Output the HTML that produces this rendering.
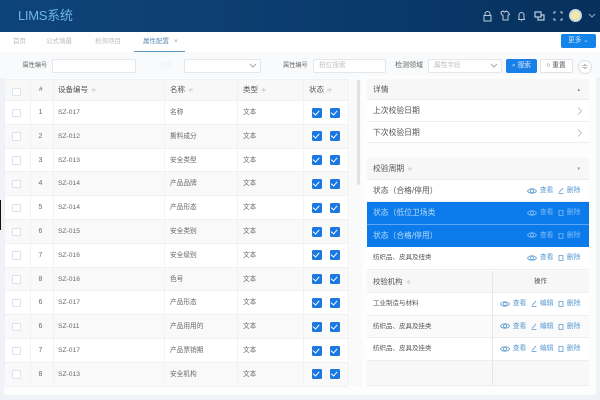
<!DOCTYPE html>
<html lang="zh">
<head>
<meta charset="utf-8">
<title>LIMS系统</title>
<style>
*{box-sizing:border-box}
html,body{margin:0;padding:0}
body{width:600px;height:400px;overflow:hidden;position:relative;background:#eff2f6;font-family:"Liberation Sans","Noto Sans CJK SC",sans-serif;color:#555;font-size:8px}
.a{position:absolute;white-space:nowrap}
.hdr{left:0;top:0;width:600px;height:32px;background:linear-gradient(90deg,#0d4478 0,#0e3f72 35%,#0a3a6c 60%,#07305c 100%)}
.logo{left:18px;top:7px;font-size:13px;line-height:18px;color:#6fb4ea;letter-spacing:-.3px}
.tabs{left:0;top:32px;width:600px;height:20px;background:#fff}
.tab{top:37px;font-size:6.5px;line-height:10px;color:#b8bcc1}
.band{left:0;top:52px;width:600px;height:26px;background:#f9fafb}
.inp{height:14px;background:#fff;border:1px solid #e3e6ea;border-radius:2px;font-size:6.700px;line-height:12px;color:#c0c0c0;padding-left:5px}
.lbl{font-size:6.200px;line-height:12px;color:#666}
.btn{height:14px;border-radius:2px;font-size:6.700px;line-height:13px;text-align:center}
.card{left:4px;top:78px;width:358px;height:317px;background:#fdfdfe}
.tbl{left:4px;top:79px;width:345px;height:307px;background:#fff;border:1px solid #eef0f2}
.row{position:absolute;left:0;width:343px;height:23.8px;border-bottom:1px solid #eff1f3;background:#fff}
.row.e{background:#f9f9f9}
.row.h{top:0;height:21px;background:#f8f8f8}
.vl{position:absolute;top:0;bottom:0;width:1px;background:#f1f2f4}
.c{position:absolute;top:0;line-height:23px;font-size:6.700px;color:#6a6a6a}
.n{font-size:7px}
.h .c{line-height:20px;font-size:7.500px;color:#555}
.cb{position:absolute;left:7px;top:7.500px;width:8.500px;height:8.500px;background:#fff;border:1px solid #dfe2e6;border-radius:1px}
.ck{position:absolute;top:6.500px;width:10px;height:10px;background:#1a78e0;border-radius:1.500px}
.ck:after{content:"";position:absolute;left:2.800px;top:1.200px;width:3px;height:5.400px;border:solid #fff;border-width:0 1.200px 1.200px 0;transform:rotate(42deg)}
.s{color:#c0c0c0;font-size:6.500px;margin-left:3px}
.pr{left:367px;width:222px;border-bottom:1px solid #eceef1;font-size:7.800px;line-height:22px;color:#555;padding-left:6px;background:#fff}
.ph{background:#f7f7f7}
.sm{font-size:6.500px}
.blue{background:#0b7bec;color:#b9daf9;border-bottom:1px solid #5ba7f2}
.op{position:absolute;top:0;right:8.500px;font-size:6.800px;color:#5b9bd2;line-height:22px;display:flex;align-items:center}
.blue .op{color:#7fbdf5}
.op svg{margin:-1px 2.500px 0 5px;flex:none}
.op svg:first-child{margin-left:0}
.ar{position:absolute;right:7px;top:7px}
.dot{position:absolute;right:9px;top:0;color:#888;font-size:5px;line-height:22px}
</style>
</head>
<body>
<div class="a hdr"></div>
<div class="a logo">LIMS系统</div>

<svg class="a" style="left:482px;top:9px" width="118" height="14" viewBox="0 0 118 14" fill="none" stroke="#bccbdc" stroke-width="1">
<path d="M3 6.500V5a2.500 2.500 0 0 1 5 0v1.500M2 6.500h7v5.500H2z"/>
<path d="M19 3l2-1 1.500 1.200L24 2l2 1 1.500 2.500-1.500.8V11h-5V6.300l-1.500-.8z"/>
<path d="M37 10.500V6a2.500 2.500 0 0 1 5 0v4.500zM36 10.500h7M39 12h1"/>
<path d="M53 3h6v5h-6zM56 8v3h6V6h-3" stroke-width="1.200"/>
<path d="M72 5V3h2M78 3h2v2M80 9v2h-2M74 11h-2V9"/>
</svg>
<div class="a" style="left:568.500px;top:9px;width:13px;height:13px;border-radius:50%;background:#f0e7a8;border:2px solid #c8dbe2"></div>
<svg class="a" style="left:588px;top:13px" width="8" height="6" viewBox="0 0 8 6" fill="none" stroke="#8fa9c4"><path d="M1 1l3 3 3-3"/></svg>

<div class="a tabs"></div>
<div class="a band"></div>
<div class="a tab" style="left:13px">首页</div>
<div class="a tab" style="left:46px">公式填最</div>
<div class="a tab" style="left:95px">检测项目</div>
<div class="a tab" style="left:143px;color:#5f8fb8">属性配置</div>
<div class="a tab" style="left:174px;color:#7c9cb8">×</div>
<div class="a" style="left:134px;top:51px;width:51px;height:1px;background:#5d9ac8"></div>
<div class="a btn" style="left:561px;top:34px;width:35px;height:14px;background:#1484ea;color:#cfe6fb">更多 ⌄</div>

<div class="a lbl" style="left:22.500px;top:60px">属性编号</div>
<div class="a inp" style="left:52px;top:59px;width:84px"></div>
<div class="a lbl" style="left:160px;top:60px;color:#f0f0f0">检测</div>
<div class="a inp" style="left:184px;top:59px;width:77px"></div>
<svg class="a" style="left:249px;top:63px" width="8" height="6" viewBox="0 0 8 6" fill="none" stroke="#aaa"><path d="M1 1l3 3 3-3"/></svg>
<div class="a lbl" style="left:283px;top:60px">属性编号</div>
<div class="a inp" style="left:313px;top:59px;width:73px">拍位搜索</div>
<div class="a lbl" style="left:395px;top:60px;font-size:7px">检测领域</div>
<div class="a inp" style="left:428px;top:59px;width:74px">属性字段</div>
<svg class="a" style="left:490px;top:63px" width="8" height="6" viewBox="0 0 8 6" fill="none" stroke="#aaa"><path d="M1 1l3 3 3-3"/></svg>
<div class="a btn" style="left:506px;top:59px;width:31px;background:#1a80e8;color:#d6e9fc">⌕ 搜索</div>
<div class="a btn" style="left:539.500px;top:59px;width:33px;background:#fff;border:1px solid #e0e3e7;color:#555;line-height:12px">○ 重置</div>
<div class="a" style="left:578px;top:59.500px;width:14px;height:14px;border:1px solid #dcdfe4;border-radius:50%;background:#fff;color:#777;font-size:8px;line-height:12px;text-align:center">≑</div>

<div class="a card"></div>
<div class="a tbl">
<div class="row h">
<span class="cb"></span>
<span class="c" style="left:34px;font-size:6.500px">#</span>
<span class="c" style="left:53px">设备编号<span class="s">≑</span></span>
<span class="c" style="left:165px">名称<span class="s">≑</span></span>
<span class="c" style="left:238px">类型<span class="s">≑</span></span>
<span class="c" style="left:304px">状态<span class="s">≑</span></span>
</div>

<div class="row" style="top:21px"><span class="cb"></span><span class="c n" style="left:33.500px">1</span><span class="c" style="left:53px">SZ-017</span><span class="c" style="left:165px">名称</span><span class="c" style="left:238px">文本</span><span class="ck" style="left:306.500px"></span><span class="ck" style="left:324.500px"></span></div>
<div class="row e" style="top:44.800px"><span class="cb"></span><span class="c n" style="left:33.500px">2</span><span class="c" style="left:53px">SZ-012</span><span class="c" style="left:165px">撕料成分</span><span class="c" style="left:238px">文本</span><span class="ck" style="left:306.500px"></span><span class="ck" style="left:324.500px"></span></div>
<div class="row" style="top:68.600px"><span class="cb"></span><span class="c n" style="left:33.500px">3</span><span class="c" style="left:53px">SZ-013</span><span class="c" style="left:165px">安全类型</span><span class="c" style="left:238px">文本</span><span class="ck" style="left:306.500px"></span><span class="ck" style="left:324.500px"></span></div>
<div class="row e" style="top:92.400px"><span class="cb"></span><span class="c n" style="left:33.500px">4</span><span class="c" style="left:53px">SZ-014</span><span class="c" style="left:165px">产品品牌</span><span class="c" style="left:238px">文本</span><span class="ck" style="left:306.500px"></span><span class="ck" style="left:324.500px"></span></div>
<div class="row" style="top:116.200px"><span class="cb"></span><span class="c n" style="left:33.500px">5</span><span class="c" style="left:53px">SZ-014</span><span class="c" style="left:165px">产品形态</span><span class="c" style="left:238px">文本</span><span class="ck" style="left:306.500px"></span><span class="ck" style="left:324.500px"></span></div>
<div class="row e" style="top:140px"><span class="cb"></span><span class="c n" style="left:33.500px">6</span><span class="c" style="left:53px">SZ-015</span><span class="c" style="left:165px">安全类别</span><span class="c" style="left:238px">文本</span><span class="ck" style="left:306.500px"></span><span class="ck" style="left:324.500px"></span></div>
<div class="row" style="top:163.800px"><span class="cb"></span><span class="c n" style="left:33.500px">7</span><span class="c" style="left:53px">SZ-016</span><span class="c" style="left:165px">安全级别</span><span class="c" style="left:238px">文本</span><span class="ck" style="left:306.500px"></span><span class="ck" style="left:324.500px"></span></div>
<div class="row e" style="top:187.600px"><span class="cb"></span><span class="c n" style="left:33.500px">8</span><span class="c" style="left:53px">SZ-016</span><span class="c" style="left:165px">色号</span><span class="c" style="left:238px">文本</span><span class="ck" style="left:306.500px"></span><span class="ck" style="left:324.500px"></span></div>
<div class="row" style="top:211.400px"><span class="cb"></span><span class="c n" style="left:33.500px">6</span><span class="c" style="left:53px">SZ-017</span><span class="c" style="left:165px">产品形态</span><span class="c" style="left:238px">文本</span><span class="ck" style="left:306.500px"></span><span class="ck" style="left:324.500px"></span></div>
<div class="row e" style="top:235.200px"><span class="cb"></span><span class="c n" style="left:33.500px">6</span><span class="c" style="left:53px">SZ-011</span><span class="c" style="left:165px">产品用用的</span><span class="c" style="left:238px">文本</span><span class="ck" style="left:306.500px"></span><span class="ck" style="left:324.500px"></span></div>
<div class="row" style="top:259px"><span class="cb"></span><span class="c n" style="left:33.500px">7</span><span class="c" style="left:53px">SZ-017</span><span class="c" style="left:165px">产品票销期</span><span class="c" style="left:238px">文本</span><span class="ck" style="left:306.500px"></span><span class="ck" style="left:324.500px"></span></div>
<div class="row e" style="top:282.800px"><span class="cb"></span><span class="c n" style="left:33.500px">8</span><span class="c" style="left:53px">SZ-013</span><span class="c" style="left:165px">安全机构</span><span class="c" style="left:238px">文本</span><span class="ck" style="left:306.500px"></span><span class="ck" style="left:324.500px"></span></div>

<div class="vl" style="left:25px"></div>
<div class="vl" style="left:48px"></div>
<div class="vl" style="left:159px"></div>
<div class="vl" style="left:232px"></div>
<div class="vl" style="left:298px"></div>
</div>

<div class="a" style="left:350px;top:79px;width:12px;height:307px;background:#f9fafb"></div>
<div class="a" style="left:356.500px;top:80px;width:3.500px;height:105px;background:#e0e2e5;border-radius:2px"></div>

<div class="a" style="left:362px;top:75px;width:234px;height:320px;background:#fdfdfe"></div>
<div class="a pr ph" style="top:79px;height:21px">详情<span class="dot">▴</span></div>
<div class="a pr" style="top:100px;height:22px">上次校验日期<svg class="ar" width="5" height="8" viewBox="0 0 5 8" fill="none" stroke="#c4c4c4"><path d="M1 .5L4.500 4 1 7.500"/></svg></div>
<div class="a pr" style="top:122px;height:21px">下次校验日期<svg class="ar" width="5" height="8" viewBox="0 0 5 8" fill="none" stroke="#c4c4c4"><path d="M1 .5L4.500 4 1 7.500"/></svg></div>

<div class="a pr ph" style="top:158px;height:22px">校验周期<span class="s">≑</span><span class="dot">▾</span></div>
<div class="a pr" style="top:180px;height:22px">状态（合格/停用）
<span class="op"><svg width="10" height="8" viewBox="0 0 10 8" fill="none" stroke="currentColor" stroke-width=".8"><path d="M.5 4C2.300 1 7.700 1 9.500 4 7.700 7 2.300 7 .5 4z"/><circle cx="5" cy="4" r="1.500"/></svg>查看<svg width="6" height="7" viewBox="0 0 6 7" fill="none" stroke="currentColor" stroke-width=".8"><path d="M1 5.500L5 1M.5 6.500h5"/></svg>删除</span></div>
<div class="a pr blue" style="top:202px;height:22.500px">状态（低位卫场类
<span class="op"><svg width="10" height="8" viewBox="0 0 10 8" fill="none" stroke="currentColor" stroke-width=".8"><path d="M.5 4C2.300 1 7.700 1 9.500 4 7.700 7 2.300 7 .5 4z"/><circle cx="5" cy="4" r="1.500"/></svg>查看<svg width="6" height="7" viewBox="0 0 6 7" fill="none" stroke="currentColor" stroke-width=".8"><path d="M1 1.500h4v5H1z"/></svg>删除</span></div>
<div class="a pr blue" style="top:224.500px;height:22.500px;border-bottom:0">状态（合格/停用）
<span class="op"><svg width="10" height="8" viewBox="0 0 10 8" fill="none" stroke="currentColor" stroke-width=".8"><path d="M.5 4C2.300 1 7.700 1 9.500 4 7.700 7 2.300 7 .5 4z"/><circle cx="5" cy="4" r="1.500"/></svg>查看<svg width="6" height="7" viewBox="0 0 6 7" fill="none" stroke="currentColor" stroke-width=".8"><path d="M1 1.500h4v5H1z"/></svg>删除</span></div>
<div class="a pr sm" style="top:247px;height:23px">纺织品、皮具及纽类
<span class="op"><svg width="10" height="8" viewBox="0 0 10 8" fill="none" stroke="currentColor" stroke-width=".8"><path d="M.5 4C2.300 1 7.700 1 9.500 4 7.700 7 2.300 7 .5 4z"/><circle cx="5" cy="4" r="1.500"/></svg>查看<svg width="6" height="7" viewBox="0 0 6 7" fill="none" stroke="currentColor" stroke-width=".8"><path d="M1 1.500h4v5H1z"/></svg>删除</span></div>

<div class="a pr ph" style="top:271px;height:22px;font-size:7.400px">校验机构<span class="s">≑</span></div>
<div class="a" style="left:492px;top:271px;width:97px;line-height:22px;text-align:center;font-size:6.500px;color:#555">操作</div>
<div class="a pr sm" style="top:293px;height:22.500px">工业制造与材料
<span class="op"><svg width="10" height="8" viewBox="0 0 10 8" fill="none" stroke="currentColor" stroke-width=".8"><path d="M.5 4C2.300 1 7.700 1 9.500 4 7.700 7 2.300 7 .5 4z"/><circle cx="5" cy="4" r="1.500"/></svg>查看<svg width="6" height="7" viewBox="0 0 6 7" fill="none" stroke="currentColor" stroke-width=".8"><path d="M1 5.500L5 1M.5 6.500h5"/></svg>编辑<svg width="6" height="7" viewBox="0 0 6 7" fill="none" stroke="currentColor" stroke-width=".8"><path d="M1 1.500h4v5H1z"/></svg>删除</span></div>
<div class="a pr sm" style="top:315.500px;height:22.500px;background:#fafafa">纺织品、皮具及挂类
<span class="op"><svg width="10" height="8" viewBox="0 0 10 8" fill="none" stroke="currentColor" stroke-width=".8"><path d="M.5 4C2.300 1 7.700 1 9.500 4 7.700 7 2.300 7 .5 4z"/><circle cx="5" cy="4" r="1.500"/></svg>查看<svg width="6" height="7" viewBox="0 0 6 7" fill="none" stroke="currentColor" stroke-width=".8"><path d="M1 5.500L5 1M.5 6.500h5"/></svg>编辑<svg width="6" height="7" viewBox="0 0 6 7" fill="none" stroke="currentColor" stroke-width=".8"><path d="M1 1.500h4v5H1z"/></svg>删除</span></div>
<div class="a pr sm" style="top:338px;height:22.500px">纺织品、皮具及挂类
<span class="op"><svg width="10" height="8" viewBox="0 0 10 8" fill="none" stroke="currentColor" stroke-width=".8"><path d="M.5 4C2.300 1 7.700 1 9.500 4 7.700 7 2.300 7 .5 4z"/><circle cx="5" cy="4" r="1.500"/></svg>查看<svg width="6" height="7" viewBox="0 0 6 7" fill="none" stroke="currentColor" stroke-width=".8"><path d="M1 5.500L5 1M.5 6.500h5"/></svg>编辑<svg width="6" height="7" viewBox="0 0 6 7" fill="none" stroke="currentColor" stroke-width=".8"><path d="M1 1.500h4v5H1z"/></svg>删除</span></div>
<div class="a pr" style="top:360.500px;height:25px;background:#f8f8f8"></div>
<div class="a" style="left:492px;top:271px;width:1px;height:114px;background:#e4e6ea"></div>

<div class="a" style="left:0;top:200px;width:1px;height:30px;background:#111"></div>
</body>
</html>
